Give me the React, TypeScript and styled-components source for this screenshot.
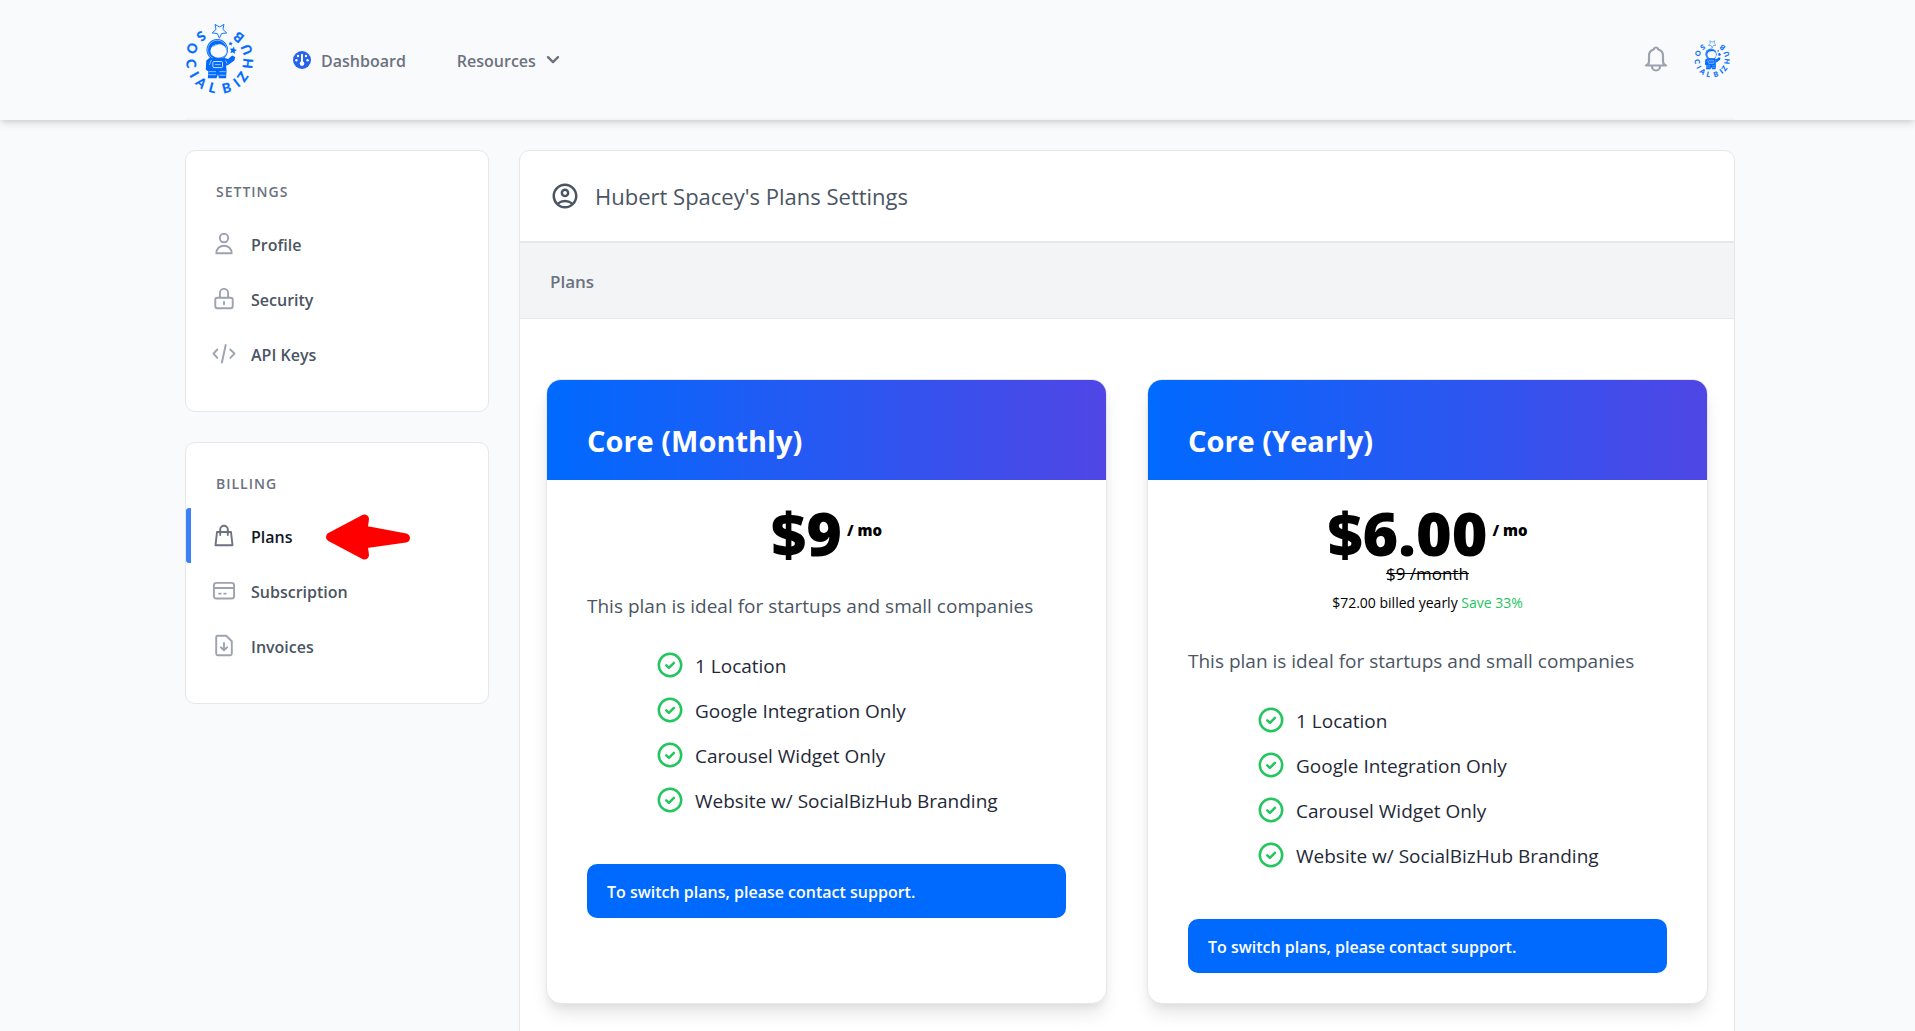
import React from "react";
import styled, { createGlobalStyle } from "styled-components";
import { MdOutlineAccountCircle } from "react-icons/md";

const GlobalStyle = createGlobalStyle`
  *, *::before, *::after { box-sizing: border-box; }
  body {
    margin: 0;
    background: #f9fafc;
    color: #000;
    font-family: "Segoe UI", "Open Sans", "Noto Sans", sans-serif;
    font-size: 16px;
    line-height: 24px;
  }
  h1, h2, h3, p, ul { margin: 0; padding: 0; }
  ul { list-style: none; }
  a { color: inherit; text-decoration: none; }
  button { font: inherit; border: 0; background: none; padding: 0; cursor: pointer; }
  svg { display: block; flex: none; overflow: visible; }
`;

const Header = styled.header`
  position: relative;
  padding-left: 5px;
  background: #f9fafc;
  box-shadow: 0 5px 8px -1px rgba(0, 0, 0, 0.1), 0 2px 5px -1px rgba(0, 0, 0, 0.1);
`;

const HeaderInner = styled.div`
  display: flex;
  align-items: center;
  max-width: 1550px;
  height: 120px;
  margin: 0 auto;
  border-bottom: 2px solid #f3f4f6;
`;

const LogoLink = styled.a`
  display: block;
`;

const Nav = styled.nav`
  display: flex;
  align-items: center;
  gap: 51px;
  margin-left: 36px;
  padding-top: 2px;
  color: #6b7280;
  font-weight: 600;
`;

const NavLink = styled.a`
  display: flex;
  align-items: center;
  gap: 10px;
`;

const NavButton = styled.button`
  display: flex;
  align-items: center;
  gap: 10px;
  color: inherit;
`;

const Label = styled.span`
  padding-top: 2px;
`;

const HeaderActions = styled.div`
  display: flex;
  align-items: center;
  gap: 26px;
  margin-left: auto;
  padding-right: 3px;
`;

const IconButton = styled.button`
  display: block;
  color: #9ca3af;
`;

const Page = styled.div`
  padding: 30px 0 60px 5px;
`;

const Columns = styled.div`
  display: grid;
  grid-template-columns: 304px minmax(0, 1fr);
  align-items: start;
  gap: 30px;
  max-width: 1550px;
  margin: 0 auto;
`;

const Sidebar = styled.aside`
  display: flex;
  flex-direction: column;
  gap: 30px;
`;

const Panel = styled.section`
  border: 1px solid #e5e7eb;
  border-radius: 10px;
  background: #fff;
`;

const MenuPanel = styled(Panel)`
  padding: 31px 0 30px;
`;

const MenuHeading = styled.h2`
  margin-bottom: 14px;
  padding-left: 30px;
  color: #6b7280;
  font-size: 14px;
  line-height: 20px;
  font-weight: 600;
  letter-spacing: 1px;
  text-transform: uppercase;
`;

const MenuItem = styled.li<{ $active?: boolean }>`
  display: flex;
  height: 55px;
  border-left: 5px solid ${(p) => (p.$active ? "#3b82f6" : "transparent")};
  border-radius: 3px;
  color: ${(p) => (p.$active ? "#111827" : "#4b5563")};
  svg.icon { color: ${(p) => (p.$active ? "#6b7280" : "#9ca3af")}; }
`;

const MenuLink = styled.a`
  position: relative;
  display: flex;
  align-items: center;
  gap: 15px;
  padding-left: 21px;
  font-weight: 600;
`;

const Pointer = styled.svg`
  position: absolute;
  left: 100%;
  top: 5px;
  margin-left: 32px;
`;

const PanelHeader = styled.div`
  display: flex;
  align-items: center;
  gap: 15px;
  height: 92px;
  padding: 0 30px;
  border-bottom: 2px solid #e5e7eb;
  color: #4b5563;
`;

const PanelTitle = styled.h1`
  font-size: 22px;
  line-height: 32px;
  font-weight: 500;
`;

const SubHeader = styled.div`
  display: flex;
  align-items: center;
  height: 76px;
  padding: 0 30px;
  border-bottom: 1px solid #e5e7eb;
  background: #f3f4f6;
`;

const SubTitle = styled.h2`
  padding-top: 2px;
  color: #6b7280;
  font-size: 17px;
  line-height: 24px;
  font-weight: 600;
`;

const PlanGrid = styled.div`
  display: grid;
  grid-template-columns: repeat(2, minmax(0, 1fr));
  gap: 40px;
  padding: 60px 26px;
`;

const PlanCard = styled.article`
  display: flex;
  flex-direction: column;
  overflow: hidden;
  border: 1px solid #e5e7eb;
  border-radius: 15px;
  background: #fff;
  box-shadow: 0 12px 18px -3px rgba(0, 0, 0, 0.1), 0 5px 8px -2px rgba(0, 0, 0, 0.05);
`;

const PlanHeader = styled.div`
  padding: 41px 40px 19px;
  background: linear-gradient(to right, #006aff, #4f46e5);
`;

const PlanName = styled.h2`
  color: #fff;
  font-size: 29px;
  line-height: 40px;
  font-weight: 700;
`;

const PlanBody = styled.div`
  display: flex;
  flex-direction: column;
  padding: 24px 40px 30px;
`;

const Price = styled.div`
  display: flex;
  justify-content: center;
  gap: 5px;
  height: 60px;
  font-weight: 800;
`;

const Amount = styled.span`
  font-size: 61px;
  line-height: 58px;
`;

const Period = styled.span`
  padding-top: 14px;
  font-size: 15px;
  line-height: 24px;
`;

const Billing = styled.div`
  display: flex;
  flex-direction: column;
  align-items: center;
  padding-bottom: 4px;
`;

const OldPrice = styled.s`
  font-size: 17px;
  line-height: 20px;
`;

const Billed = styled.p`
  padding-top: 6px;
  font-size: 14px;
  line-height: 25px;
`;

const Saving = styled.span`
  color: #22c55e;
`;

const Description = styled.p`
  margin-top: 27px;
  color: #4b5563;
  font-size: 19px;
  line-height: 30px;
`;

const Features = styled.ul`
  display: flex;
  flex-direction: column;
  gap: 15px;
  margin: 29px 0 49px 70px;
`;

const Feature = styled.li`
  display: flex;
  align-items: center;
  gap: 12px;
  height: 30px;
  color: #1f2937;
  font-size: 19px;
  line-height: 28px;
`;

const SupportButton = styled.button`
  height: 54px;
  padding: 2px 20px 0;
  border-radius: 10px;
  background: #006aff;
  color: #fff;
  font-weight: 600;
  text-align: left;
`;

/* Letters of the brand name, running round the badge from top left to top right. */
const LETTERS: [string, number, number][] = [
  ["S", 21, 22], ["O", 12, 34], ["C", 11, 49], ["I", 14, 60],
  ["A", 21, 68], ["L", 32, 73], ["B", 46, 73], ["I", 56, 68],
  ["Z", 62, 62], ["H", 67, 49], ["U", 66, 35], ["B", 58, 23],
];

const starPath = (cx: number, cy: number, r: number, turn: number) =>
  Array.from({ length: 10 }, (_, i) => {
    const a = ((turn + i * 36) * Math.PI) / 180;
    const d = i % 2 ? r * 0.48 : r;
    return `${i ? "L" : "M"}${(cx + d * Math.sin(a)).toFixed(2)} ${(cy - d * Math.cos(a)).toFixed(2)}`;
  }).join("") + "Z";

function Logo({ size }: { size: number }) {
  return (
    <svg width={size} height={size} viewBox="5 9 71 71" fill="#006aff" role="img" aria-label="SocialBizHub">
      {LETTERS.map(([ch, x, y], i) => {
        const turn = (Math.atan2(39 - x, y - 46) * 180) / Math.PI;
        return (
          <text key={i} transform={`translate(${x} ${y}) rotate(${turn.toFixed(1)})`} y="4.500" textAnchor="middle"
            fontFamily="Lato, sans-serif" fontSize="13" fontWeight="700" stroke="#006aff" strokeWidth="0.3">{ch}</text>
        );
      })}
      <path d={starPath(39, 16.5, 7.5, 180)} fill="none" stroke="#006aff" strokeWidth="0.9" />
      <path d={starPath(52.5, 36, 3.8, 12)} />
      <path d={starPath(50, 29.5, 2.2, 10)} />
      <circle cx="36.8" cy="35.5" r="10.600" />
      <circle cx="36.8" cy="35.5" r="9.500" fill="none" stroke="#f9fafc" strokeWidth="0.5" />
      <ellipse cx="38" cy="36.5" rx="8" ry="6.8" fill="#f9fafc" />
      <path d="M33 32.5c1.200-1.800 3-2.500 5-2.500" fill="none" stroke="#006aff" strokeWidth="0.6" />
      <path d="M29 43.500h15l3.500 1 4-3.500 3 1.500-.8 3.500-6.200 4.500-2 .5.500 5-.500 7.500H38.500l-1-4-1.500 4H27.500l.5-7-2.500-1.500.5-9z" />
      <rect x="32.500" y="47" width="9.500" height="6" rx="1" fill="none" stroke="#f9fafc" strokeWidth="0.8" />
      <path d="M34.500 50h5.500M28.500 57h7M39 57h6M28 60h7.500M39 60.500h6M31 45.500l-2 5M45 46l1.500 3" fill="none" stroke="#f9fafc" strokeWidth="0.6" />
    </svg>
  );
}

const GaugeIcon = () => (
  <svg width="18" height="18" viewBox="0 0 18 18" aria-hidden="true">
    <circle cx="9" cy="9" r="9" fill="#2563eb" />
    <g fill="#f9fafc">
      <circle cx="3.400" cy="9.200" r="1.200" />
      <circle cx="5" cy="5" r="1.200" />
      <circle cx="13" cy="5" r="1.200" />
      <circle cx="14.600" cy="9.200" r="1.200" />
      <circle cx="9" cy="12.600" r="2.300" />
      <rect x="8" y="2.800" width="2" height="9" rx="1" />
    </g>
  </svg>
);

const ChevronIcon = () => (
  <svg width="14" height="14" viewBox="0 0 14 14" fill="none" stroke="currentColor" strokeWidth="2.400" strokeLinecap="round" strokeLinejoin="round" aria-hidden="true">
    <path d="M2 4.200l5 5 5-5" />
  </svg>
);

const BellIcon = () => (
  <svg width="24" height="27" viewBox="0 0 24 27" fill="none" stroke="currentColor" strokeWidth="2.200" strokeLinecap="round" strokeLinejoin="round" aria-hidden="true">
    <path d="M2 19.500h20c-1.800-.600-3-2-3-4V9.500C19 6.500 17 4.300 14.300 3.500 14 2.300 13.200 1.500 12 1.500s-2 .8-2.300 2C7 4.300 5 6.500 5 9.500v6c0 2-1.200 3.400-3 4z" />
    <path d="M8 20.500a4 4 0 0 0 8 0" />
  </svg>
);

const CheckIcon = () => (
  <svg width="26" height="26" viewBox="0 0 26 26" fill="none" stroke="#22c55e" strokeWidth="2.500" strokeLinecap="round" strokeLinejoin="round" aria-hidden="true">
    <circle cx="13" cy="13" r="11.200" />
    <path d="M9.300 13.300l2.600 2.500 5-5" />
  </svg>
);

const ICONS: Record<string, React.ReactNode> = {
  Profile: <><circle cx="12" cy="6" r="4.200" /><path d="M4.300 21.200c0-4.600 3.400-7.500 7.700-7.500s7.700 2.900 7.700 7.500z" /></>,
  Security: <><rect x="3.300" y="10.700" width="17.400" height="10.600" rx="2" /><path d="M7.900 10.500V6a4.100 4.100 0 0 1 8.200 0v4.500M12 15v2.200" /></>,
  "API Keys": <path d="M13.700 3l-3.800 17.500M5.300 7.500L1.500 11.700l3.800 4.200M18.300 7.500l4.200 4.200-4.200 4.200" />,
  Plans: <><path d="M5 8h14l1.500 13.200h-17z" /><path d="M8.200 11V5.600a3.800 3.800 0 0 1 7.600 0V11" /></>,
  Subscription: <><rect x="1.900" y="3.900" width="20.200" height="15.600" rx="2.500" /><path d="M2 9h20M7.200 14.600h1.600M12.200 14.600h1.600" /></>,
  Invoices: <><path d="M5.500 1.800h8.700l5.600 5.400v12.500a1.500 1.500 0 0 1-1.500 1.500H5.700a1.500 1.500 0 0 1-1.500-1.500V3.300a1.500 1.500 0 0 1 1.300-1.500z" /><path d="M12 9v7.300M8.800 13.300l3.200 3 3.200-3" /></>,
};

function Menu({ title, items, active }: { title: string; items: string[]; active?: string }) {
  return (
    <MenuPanel>
      <MenuHeading>{title}</MenuHeading>
      <ul>
        {items.map((name) => (
          <MenuItem key={name} $active={name === active}>
            <MenuLink href="#" aria-current={name === active ? "page" : undefined}>
              <svg className="icon" width="24" height="24" viewBox="0 0 24 24" fill="none" stroke="currentColor" strokeWidth="1.900" strokeLinecap="round" strokeLinejoin="round" aria-hidden="true">
                {ICONS[name]}
              </svg>
              <Label>{name}</Label>
              {name === active && (
                <Pointer width="86" height="48" viewBox="0 0 86 48" aria-hidden="true">
                  <path d="M5.500 24L39.500 6 38 17 80.500 25 38 31 39.500 42z" fill="#f00" stroke="#f00" strokeWidth="9" strokeLinejoin="round" />
                </Pointer>
              )}
            </MenuLink>
          </MenuItem>
        ))}
      </ul>
    </MenuPanel>
  );
}

type Plan = { name: string; price: string; old?: string; billed?: string; saving?: string };

const PLANS: Plan[] = [
  { name: "Core (Monthly)", price: "$9" },
  { name: "Core (Yearly)", price: "$6.00", old: "$9 /month", billed: "$72.00 billed yearly", saving: "Save 33%" },
];

const FEATURES = ["1 Location", "Google Integration Only", "Carousel Widget Only", "Website w/ SocialBizHub Branding"];

export default function App() {
  return (
    <>
      <GlobalStyle />
      <Header>
        <HeaderInner>
          <LogoLink href="#"><Logo size={72} /></LogoLink>
          <Nav>
            <NavLink href="#"><GaugeIcon /><Label>Dashboard</Label></NavLink>
            <NavButton type="button"><Label>Resources</Label><ChevronIcon /></NavButton>
          </Nav>
          <HeaderActions>
            <IconButton type="button" aria-label="Notifications"><BellIcon /></IconButton>
            <IconButton type="button" aria-label="Account"><Logo size={38} /></IconButton>
          </HeaderActions>
        </HeaderInner>
      </Header>
      <Page>
        <Columns>
          <Sidebar>
            <Menu title="Settings" items={["Profile", "Security", "API Keys"]} />
            <Menu title="Billing" items={["Plans", "Subscription", "Invoices"]} active="Plans" />
          </Sidebar>
          <Panel as="main">
            <PanelHeader>
              <MdOutlineAccountCircle size={30} />
              <PanelTitle>Hubert Spacey's Plans Settings</PanelTitle>
            </PanelHeader>
            <SubHeader><SubTitle>Plans</SubTitle></SubHeader>
            <PlanGrid>
              {PLANS.map((plan) => (
                <PlanCard key={plan.name}>
                  <PlanHeader><PlanName>{plan.name}</PlanName></PlanHeader>
                  <PlanBody>
                    <Price><Amount>{plan.price}</Amount><Period>/ mo</Period></Price>
                    {plan.old && (
                      <Billing>
                        <OldPrice>{plan.old}</OldPrice>
                        <Billed>{plan.billed} <Saving>{plan.saving}</Saving></Billed>
                      </Billing>
                    )}
                    <Description>This plan is ideal for startups and small companies</Description>
                    <Features>
                      {FEATURES.map((f) => <Feature key={f}><CheckIcon /><Label>{f}</Label></Feature>)}
                    </Features>
                    <SupportButton type="button">To switch plans, please contact support.</SupportButton>
                  </PlanBody>
                </PlanCard>
              ))}
            </PlanGrid>
          </Panel>
        </Columns>
      </Page>
    </>
  );
}
